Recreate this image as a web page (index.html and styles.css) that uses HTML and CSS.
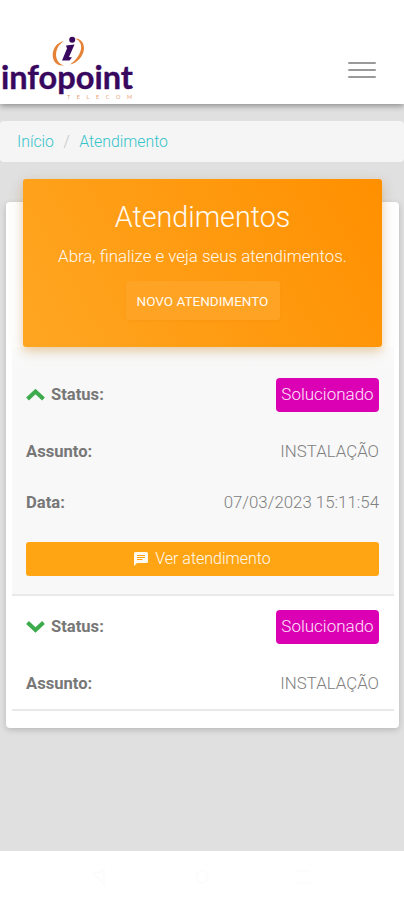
FILE: index.html
```html
<!DOCTYPE html>
<html lang="pt-BR">
<head>
<meta charset="utf-8">
<meta name="viewport" content="width=device-width, initial-scale=1">
<title>Atendimentos</title>
<link rel="stylesheet" href="styles.css">
</head>
<body>
<header class="topbar">
  <svg class="logo" width="136" height="68" viewBox="0 0 136 68" role="img" aria-label="infopoint telecom">
    <path class="ring" d="M64 5C49 8 49 31 64 29.500C53 26 54 11 64 5Z"/>
    <path class="ring" d="M75 2.500C89 3 86 25 70 28.500C81 21 86 7 75 2.500Z"/>
    <circle class="ink" cx="72.200" cy="3.800" r="3"/>
    <path class="ink" d="M66 9.500L74.500 8.500L69 21L72 21.500L69.500 24.500L62 24.500L67 12.500Z"/>
    <text class="wordmark" x="1" y="52.500" textLength="132" lengthAdjust="spacingAndGlyphs">infopoint</text>
    <text class="tagline" x="67" y="62.500" textLength="65">TELECOM</text>
  </svg>
  <button class="menu" aria-label="Menu"><span></span><span></span><span></span></button>
</header>
<main>
  <nav class="breadcrumb"><a>Início</a><span class="slash">/</span><a>Atendimento</a></nav>
  <section class="card">
    <div class="hero">
      <h1>Atendimentos</h1>
      <p>Abra, finalize e veja seus atendimentos.</p>
      <button class="new">NOVO ATENDIMENTO</button>
    </div>
    <article class="ticket open">
      <div class="row status">
        <b><svg class="chevron" width="19" height="13" viewBox="0 0 19 13"><path d="M1.500 10L9.500 2.500L17.500 10"/></svg>Status:</b>
        <span class="badge">Solucionado</span>
      </div>
      <div class="row"><b>Assunto:</b><span class="subject">INSTALAÇÃO</span></div>
      <div class="row"><b>Data:</b><span class="date">07/03/2023 15:11:54</span></div>
      <button class="view"><svg width="14" height="14" viewBox="0 0 14 14"><path fill="#fffaf0" d="M1.500 0H12.500Q14 0 14 1.500V9.500Q14 11 12.500 11H3L0 14V1.500Q0 0 1.500 0Z"/><path stroke="#ffa514" d="M3 3.500H11M3 5.500H11M3 7.500H8.500"/></svg><span>Ver atendimento</span></button>
    </article>
    <article class="ticket">
      <div class="row status">
        <b><svg class="chevron" width="19" height="13" viewBox="0 0 19 13"><path d="M1.500 1.500L9.500 9L17.500 1.500"/></svg>Status:</b>
        <span class="badge">Solucionado</span>
      </div>
      <div class="row"><b>Assunto:</b><span class="subject">INSTALAÇÃO</span></div>
    </article>
  </section>
</main>
<footer class="navbar">
  <svg width="16" height="18" viewBox="0 0 16 18"><path d="M2 6L12 2V16Z"/></svg>
  <svg width="16" height="18" viewBox="0 0 16 18"><circle cx="8" cy="9" r="6"/></svg>
  <svg width="16" height="18" viewBox="0 0 16 18"><path d="M1 3H14M1 15H14"/></svg>
</footer>
</body>
</html>
```
FILE: styles.css
```css
* { box-sizing: border-box; }
body {
  margin: 0;
  height: 900px;
  display: flex;
  flex-direction: column;
  overflow: hidden;
  background: #e0e0e0;
  color: #777;
  font: 300 16px/20px Roboto, sans-serif;
}
button { border: 0; padding: 0; font: inherit; }
.topbar {
  position: relative;
  height: 104px;
  flex: none;
  display: flex;
  justify-content: space-between;
  padding: 36px 28px 0 0;
  background: #fff;
  box-shadow: 0 2px 6px rgba(0, 0, 0, .38);
}
.logo { display: block; overflow: visible; }
.ink { fill: #38085f; }
.ring { fill: #e58235; }
.wordmark { fill: #38085f; font: 700 33px Lato, sans-serif; stroke: #38085f; stroke-width: .4px; }
.tagline { fill: #eba477; font: 400 5.500px Lato, sans-serif; }
.menu {
  display: flex;
  flex-direction: column;
  gap: 5px;
  width: 28px;
  height: 17px;
  margin-top: 26px;
  background: none;
}
.menu span { height: 2px; background: #9a9a9a; border-radius: 1px; }
main { flex: 1; padding-top: 17px; }
.breadcrumb {
  display: flex;
  height: 41px;
  align-items: center;
  padding-left: 17px;
  border-radius: 4px;
  background: #f5f5f5;
  color: #35c3ca;
  font-size: 15.800px;
}
.slash { margin: 0 9.500px; color: #c4c4c4; }
.card {
  width: 393px;
  height: 526px;
  margin: 40px 0 0 6px;
  padding: 0 5px 0 6px;
  display: flex;
  flex-direction: column;
  border-radius: 4px;
  background: #fff;
  box-shadow: 0 2px 6px rgba(0, 0, 0, .18);
}
.hero {
  position: relative;
  flex: none;
  width: 359px;
  height: 168px;
  margin: -23px 0 0 11px;
  display: flex;
  flex-direction: column;
  align-items: center;
  border-radius: 3px;
  background: linear-gradient(60deg, #ffa622, #ff9000);
  box-shadow: 0 5px 16px rgba(100, 80, 50, .16), 0 4px 8px rgba(255, 152, 0, .25);
  color: #fffaf0;
}
h1 { margin: 19px 0 0; font-size: 28.700px; line-height: 38px; font-weight: 300; }
.hero p { margin: 10px 0 0; font-size: 16.850px; }
.new {
  width: 154px;
  height: 39px;
  margin-top: 15px;
  border-radius: 3px;
  background: #ffa325;
  box-shadow: 0 1px 2px rgba(220, 120, 0, .15);
  color: #fffaf0;
  font-size: 13.500px;
  font-weight: 400;
}
.ticket { padding: 14px 15px 0 14px; border-bottom: 2px solid #e9e9e9; }
.open { height: 249px; background: linear-gradient(#fcfcfb, #f8f8f8 24px); }
.ticket:not(.open) { height: 115px; }
.row { display: flex; align-items: center; justify-content: space-between; height: 51px; font-size: 16.850px; }
.row.status { height: 34px; margin: 17px 0 14px; }
.ticket:not(.open) .row.status { margin: 0 0 14px; }
.row b { display: flex; align-items: center; font-weight: 700; font-size: 16.600px; }
.subject, .date { padding-bottom: 2px; color: #808080; }
.chevron { margin-right: 6px; fill: none; stroke: #3dab4b; stroke-width: 4; }
.badge {
  width: 103px;
  height: 34px;
  border-radius: 4px;
  background: #dc00b4;
  color: #ffe4fb;
  text-align: center;
  line-height: 33px;
  font-size: 17px;
}
.view {
  display: flex;
  align-items: center;
  justify-content: center;
  gap: 7px;
  width: 100%;
  height: 34px;
  margin-top: 14px;
  border-radius: 3px;
  background: #ffa514;
  color: #fffaf0;
}
.view svg { fill: none; }
.navbar {
  height: 49px;
  flex: none;
  display: flex;
  justify-content: center;
  gap: 86px;
  padding-top: 17px;
  background: #fff;
}
.navbar svg { fill: none; stroke: #fcfcfc; stroke-width: 2; }
```
